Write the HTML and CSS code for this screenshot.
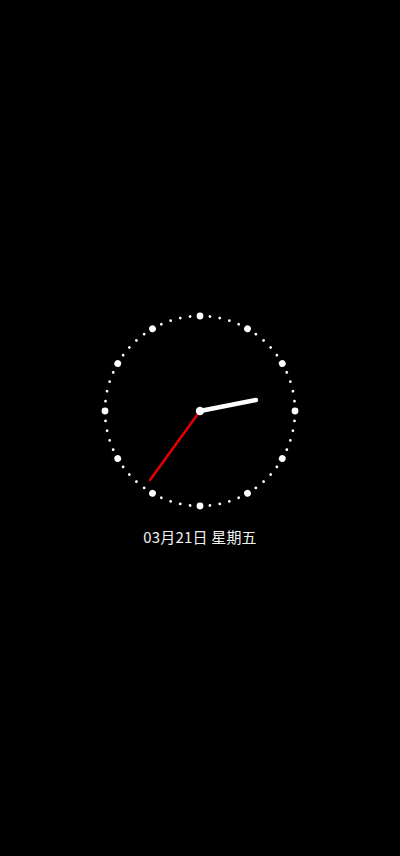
FILE: index.html
```html
<!DOCTYPE html>
<html lang="zh">
<head>
<meta charset="utf-8">
<link rel="stylesheet" href="styles.css">
</head>
<body>
<main class="screen">
  <div class="clock-group">
    <svg class="clock" width="200" height="200" viewBox="0 0 200 200">
      <g fill="#fff">
        <circle cx="100" cy="5" r="3.4" transform="rotate(0 100 100)"/>
        <circle cx="100" cy="5" r="1.4" transform="rotate(6 100 100)"/>
        <circle cx="100" cy="5" r="1.4" transform="rotate(12 100 100)"/>
        <circle cx="100" cy="5" r="1.4" transform="rotate(18 100 100)"/>
        <circle cx="100" cy="5" r="1.4" transform="rotate(24 100 100)"/>
        <circle cx="100" cy="5" r="3.4" transform="rotate(30 100 100)"/>
        <circle cx="100" cy="5" r="1.4" transform="rotate(36 100 100)"/>
        <circle cx="100" cy="5" r="1.4" transform="rotate(42 100 100)"/>
        <circle cx="100" cy="5" r="1.4" transform="rotate(48 100 100)"/>
        <circle cx="100" cy="5" r="1.4" transform="rotate(54 100 100)"/>
        <circle cx="100" cy="5" r="3.4" transform="rotate(60 100 100)"/>
        <circle cx="100" cy="5" r="1.4" transform="rotate(66 100 100)"/>
        <circle cx="100" cy="5" r="1.4" transform="rotate(72 100 100)"/>
        <circle cx="100" cy="5" r="1.4" transform="rotate(78 100 100)"/>
        <circle cx="100" cy="5" r="1.4" transform="rotate(84 100 100)"/>
        <circle cx="100" cy="5" r="3.4" transform="rotate(90 100 100)"/>
        <circle cx="100" cy="5" r="1.4" transform="rotate(96 100 100)"/>
        <circle cx="100" cy="5" r="1.4" transform="rotate(102 100 100)"/>
        <circle cx="100" cy="5" r="1.4" transform="rotate(108 100 100)"/>
        <circle cx="100" cy="5" r="1.4" transform="rotate(114 100 100)"/>
        <circle cx="100" cy="5" r="3.4" transform="rotate(120 100 100)"/>
        <circle cx="100" cy="5" r="1.4" transform="rotate(126 100 100)"/>
        <circle cx="100" cy="5" r="1.4" transform="rotate(132 100 100)"/>
        <circle cx="100" cy="5" r="1.4" transform="rotate(138 100 100)"/>
        <circle cx="100" cy="5" r="1.4" transform="rotate(144 100 100)"/>
        <circle cx="100" cy="5" r="3.4" transform="rotate(150 100 100)"/>
        <circle cx="100" cy="5" r="1.4" transform="rotate(156 100 100)"/>
        <circle cx="100" cy="5" r="1.4" transform="rotate(162 100 100)"/>
        <circle cx="100" cy="5" r="1.4" transform="rotate(168 100 100)"/>
        <circle cx="100" cy="5" r="1.4" transform="rotate(174 100 100)"/>
        <circle cx="100" cy="5" r="3.4" transform="rotate(180 100 100)"/>
        <circle cx="100" cy="5" r="1.4" transform="rotate(186 100 100)"/>
        <circle cx="100" cy="5" r="1.4" transform="rotate(192 100 100)"/>
        <circle cx="100" cy="5" r="1.4" transform="rotate(198 100 100)"/>
        <circle cx="100" cy="5" r="1.4" transform="rotate(204 100 100)"/>
        <circle cx="100" cy="5" r="3.4" transform="rotate(210 100 100)"/>
        <circle cx="100" cy="5" r="1.4" transform="rotate(216 100 100)"/>
        <circle cx="100" cy="5" r="1.4" transform="rotate(222 100 100)"/>
        <circle cx="100" cy="5" r="1.4" transform="rotate(228 100 100)"/>
        <circle cx="100" cy="5" r="1.4" transform="rotate(234 100 100)"/>
        <circle cx="100" cy="5" r="3.4" transform="rotate(240 100 100)"/>
        <circle cx="100" cy="5" r="1.4" transform="rotate(246 100 100)"/>
        <circle cx="100" cy="5" r="1.4" transform="rotate(252 100 100)"/>
        <circle cx="100" cy="5" r="1.4" transform="rotate(258 100 100)"/>
        <circle cx="100" cy="5" r="1.4" transform="rotate(264 100 100)"/>
        <circle cx="100" cy="5" r="3.4" transform="rotate(270 100 100)"/>
        <circle cx="100" cy="5" r="1.4" transform="rotate(276 100 100)"/>
        <circle cx="100" cy="5" r="1.4" transform="rotate(282 100 100)"/>
        <circle cx="100" cy="5" r="1.4" transform="rotate(288 100 100)"/>
        <circle cx="100" cy="5" r="1.4" transform="rotate(294 100 100)"/>
        <circle cx="100" cy="5" r="3.4" transform="rotate(300 100 100)"/>
        <circle cx="100" cy="5" r="1.4" transform="rotate(306 100 100)"/>
        <circle cx="100" cy="5" r="1.4" transform="rotate(312 100 100)"/>
        <circle cx="100" cy="5" r="1.4" transform="rotate(318 100 100)"/>
        <circle cx="100" cy="5" r="1.4" transform="rotate(324 100 100)"/>
        <circle cx="100" cy="5" r="3.4" transform="rotate(330 100 100)"/>
        <circle cx="100" cy="5" r="1.4" transform="rotate(336 100 100)"/>
        <circle cx="100" cy="5" r="1.4" transform="rotate(342 100 100)"/>
        <circle cx="100" cy="5" r="1.4" transform="rotate(348 100 100)"/>
        <circle cx="100" cy="5" r="1.4" transform="rotate(354 100 100)"/>
      </g>
      <line class="hand-second" x1="100" y1="100" x2="50" y2="169"/>
      <line class="hand-hour" x1="100" y1="100" x2="156" y2="89"/>
      <circle cx="100" cy="100" r="4.2" fill="#fff"/>
    </svg>
    <p class="date">03月21日 星期五</p>
  </div>
</main>
</body>
</html>
```

FILE: styles.css
```css
html, body {
  margin: 0;
  padding: 0;
  background: #000;
}

.screen {
  width: 400px;
  height: 856px;
  box-sizing: border-box;
  padding-top: 1px;
  display: flex;
  align-items: center;
  justify-content: center;
}

.clock-group {
  display: flex;
  flex-direction: column;
  align-items: center;
  gap: 16px;
}

.clock {
  display: block;
}

.hand-second {
  stroke: #e00000;
  stroke-width: 2.6;
  stroke-linecap: round;
}

.hand-hour {
  stroke: #fff;
  stroke-width: 4.4;
  stroke-linecap: round;
}

.date {
  margin: 0;
  color: #f0f0f0;
  font-family: "Noto Sans CJK SC", "Noto Sans", sans-serif;
  font-size: 15px;
  line-height: 20px;
  letter-spacing: 0.2px;
}
```
